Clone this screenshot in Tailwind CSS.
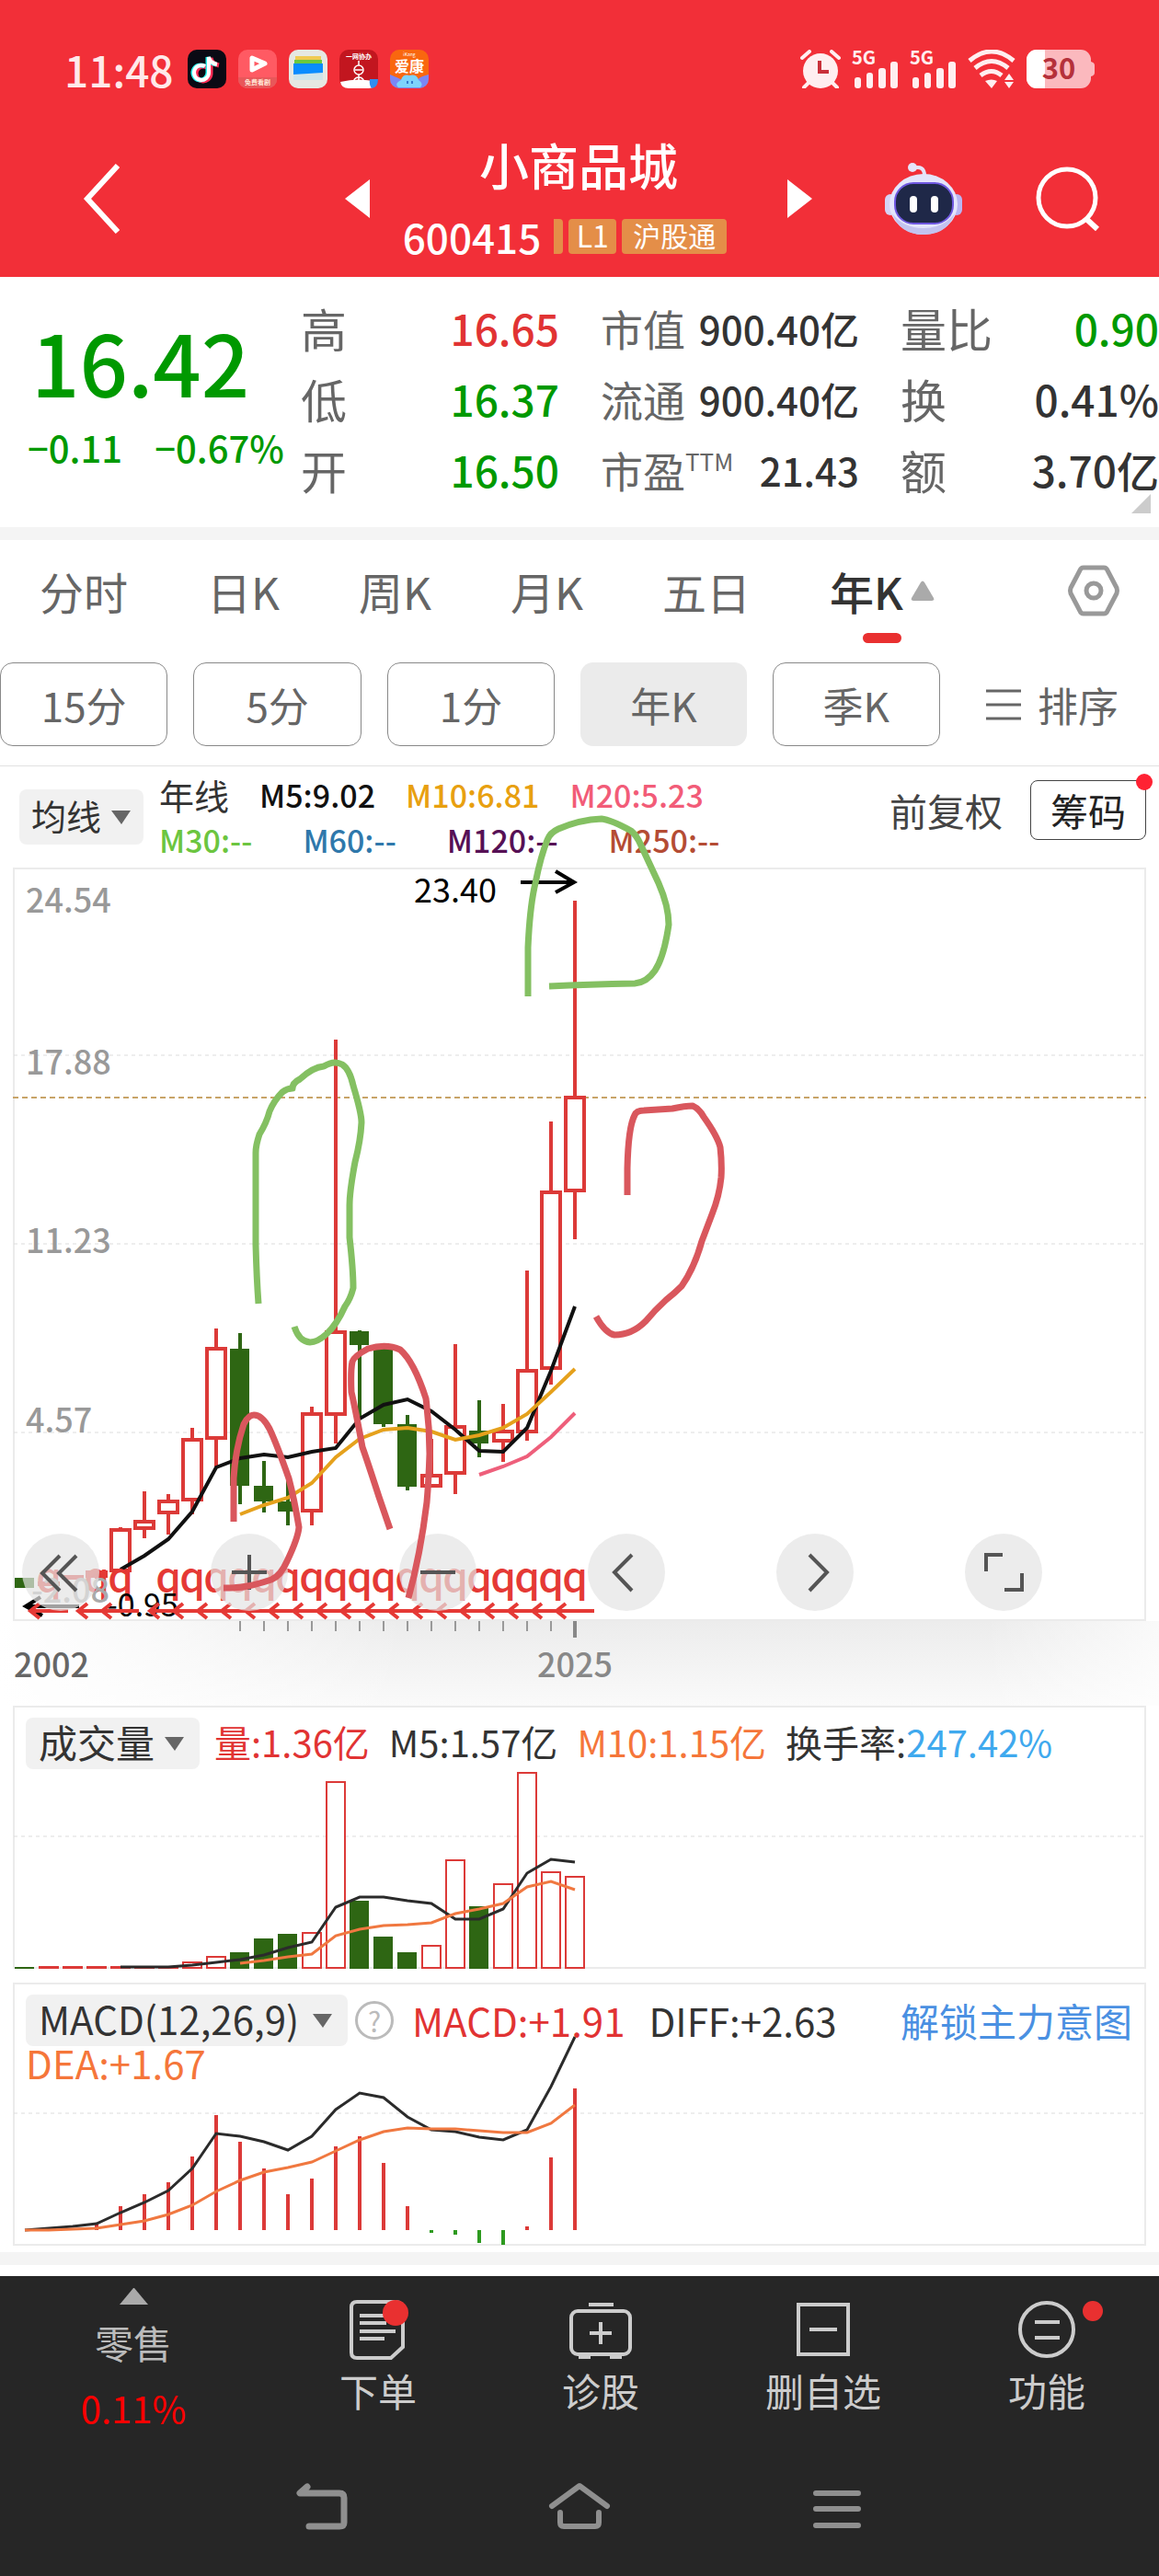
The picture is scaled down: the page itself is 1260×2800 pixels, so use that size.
<!DOCTYPE html>
<html lang="zh-CN">
<head>
  <meta charset="UTF-8" />
  <meta name="viewport" content="width=device-width, initial-scale=1.0" />
  <title>小商品城 600415</title>
  <script src="https://cdn.jsdelivr.net/npm/@tailwindcss/browser@4"></script>
</head>
<body class="bg-white text-[#333] font-['Noto_Sans_CJK_SC',sans-serif] whitespace-nowrap overflow-x-hidden">

  <header class="bg-[#f22f38] text-white">
    <!-- Barra de estado -->
    <div class="flex items-center justify-between pt-[54px] pl-[70px] pr-[70px]">
      <div class="flex items-center gap-[13px] h-[42px]">
        <span class="text-[46px] leading-[42px] font-medium text-[#ffe9ea] w-[121px]">11:48</span>
        <svg class="size-[42px]" viewBox="0 0 42 42">
          <rect width="42" height="42" rx="10" fill="#0a0a14" />
          <g fill="none" stroke-width="5">
            <path d="M20 18a8 8 0 1 0 4 7V8c1 5 4 7 9 8" stroke="#fe2c55" transform="translate(1 1)" />
            <path d="M18 18a8 8 0 1 0 4 7V8c1 5 4 7 9 8" stroke="#25f4ee" />
            <path d="M19 18a8 8 0 1 0 4 7V8c1 5 4 7 9 8" stroke="#fff" stroke-width="4" />
          </g>
        </svg>
        <svg class="size-[42px]" viewBox="0 0 42 42">
          <rect width="42" height="42" rx="10" fill="#ff5a63" />
          <path d="M0 30h42v2a10 10 0 0 1-10 10H10a10 10 0 0 1-10-10z" fill="#e8575a" />
          <path d="M15 9v13l14-7z" fill="#ff5a63" stroke="#fff" stroke-width="5" stroke-linejoin="round" />
          <text x="21" y="38" font-size="7" font-weight="700" text-anchor="middle" fill="#ffe9d8">免费看剧</text>
        </svg>
        <svg class="size-[42px]" viewBox="0 0 42 42">
          <rect width="42" height="42" rx="10" fill="#e6e8e2" />
          <path d="M5 27l32-2v8H5z" fill="#cfe4ea" />
          <path d="M7 7h28v5H7z" fill="#f0cb54" />
          <path d="M6 11h30v5H6z" fill="#6cc93e" />
          <path d="M5 15h32v10L5 27z" fill="#0a8cff" />
        </svg>
        <svg class="size-[42px]" viewBox="0 0 42 42">
          <rect width="42" height="42" rx="10" fill="#c2161f" />
          <path d="M1 35q20-5 40 0q-2 7-9 7H10q-8 0-9-7z" fill="#fff" />
          <text x="21" y="10" font-size="7" font-weight="700" text-anchor="middle" fill="#fff">一网协办</text>
          <g fill="none" stroke="#fff" stroke-width="1.5">
            <circle cx="21" cy="22" r="5" />
            <path d="M21 12v5M17 22h8M21 27v12M15 38q0-8 6-8t6 8M14 36h14" />
          </g>
          <path d="M33 32h9q0 9-7 10q-3-4-2-10z" fill="#2f8df0" />
        </svg>
        <svg class="size-[42px]" viewBox="0 0 42 42">
          <rect width="42" height="42" rx="10" fill="#f9670f" />
          <path d="M0 27q10 4 13 6l16 0q4-4 13-6v5a10 10 0 0 1-10 10H10a10 10 0 0 1-10-10z" fill="#7b86f5" />
          <path d="M9 41q-5-4 3-8q2-7 9-5q8-2 10 5q6 4 2 8z" fill="#7ed3fb" />
          <text x="21" y="7" font-size="5" text-anchor="middle" fill="#fff">iKang</text>
          <text x="21" y="24" font-size="16" font-weight="700" text-anchor="middle" fill="#fff">爱康</text>
          <path d="M19 34v3M24 34v3" stroke="#1f5fc0" stroke-width="1.5" />
        </svg>
      </div>

      <div class="flex items-center gap-3 h-[42px] text-[#ffeef0]">
        <svg class="w-11 h-[42px]" viewBox="0 0 44 42">
          <circle cx="22" cy="23" r="19" fill="currentColor" />
          <path d="M2 9l8-7M42 9l-8-7M4 41l6-6M40 41l-6-6" stroke="currentColor" stroke-width="4" stroke-linecap="round" />
          <path d="M21 12v12h10" fill="none" stroke="#c9303a" stroke-width="4" />
        </svg>
        <svg class="w-[51px] h-[42px] overflow-visible" viewBox="0 0 51 42" fill="currentColor">
          <text x="0" y="16" font-size="20" font-weight="700">5G</text>
          <rect x="3" y="30" width="7" height="12" rx="3" /><rect x="16" y="25" width="7" height="17" rx="3" />
          <rect x="29" y="20" width="8" height="22" rx="3" /><rect x="42" y="13" width="8" height="29" rx="3" />
        </svg>
        <svg class="w-[51px] h-[42px] overflow-visible" viewBox="0 0 51 42" fill="currentColor">
          <text x="0" y="16" font-size="20" font-weight="700">5G</text>
          <rect x="3" y="30" width="7" height="12" rx="3" /><rect x="16" y="25" width="7" height="17" rx="3" />
          <rect x="29" y="20" width="8" height="22" rx="3" /><rect x="42" y="13" width="8" height="29" rx="3" />
        </svg>
        <svg class="w-[52px] h-[42px]" viewBox="0 0 52 42">
          <path d="M2 12q24-20 48 0M8 20q18-15 36 0M14 28q12-9 23 0" fill="none" stroke="currentColor" stroke-width="5" />
          <path d="M19 34q7-3 13 0l-6 8zM40 33l5-7 5 7zM40 35l5 7 5-7z" fill="currentColor" />
        </svg>
        <svg class="w-[74px] h-[42px] overflow-visible" viewBox="0 0 74 42">
          <rect width="70" height="42" rx="11" fill="#fbb9be" />
          <path d="M11 0h9v42h-9A11 11 0 0 1 0 31V11A11 11 0 0 1 11 0z" fill="#fff" />
          <path d="M70 13q4 1 4 4v8q0 3-4 4z" fill="#fbb9be" />
          <text x="35" y="32" font-size="31" font-weight="700" text-anchor="middle" fill="#b5303a">30</text>
        </svg>
      </div>
    </div>

    <!-- Título -->
    <div class="flex items-center mt-[34px] h-[171px] pr-[64px]">
      <button class="w-[375px] pl-[90px] text-left" aria-label="返回">
        <svg class="w-[40px] h-[76px]" viewBox="0 0 40 76" fill="none" stroke="#fff" stroke-width="6">
          <path d="M38 2L5 38l33 36" />
        </svg>
      </button>
      <button aria-label="上一只"><svg class="w-[27px] h-[42px]" viewBox="0 0 27 42"><path d="M27 0v42L0 21z" fill="#fff" /></svg></button>
      <div class="flex-1 flex flex-col items-center gap-[14px]">
        <h1 class="text-[54px] leading-[68px] font-medium">小商品城</h1>
        <div class="flex items-center gap-[6px] h-[60px] pr-[30px]">
          <span class="text-[44px] leading-[60px] font-medium mr-2">600415</span>
          <span class="w-[10px] h-[38px] rounded-r-[4px] bg-[#e48e48]"></span>
          <span class="w-[52px] h-[38px] rounded-[4px] bg-[#e48e48] text-[32px] leading-[34px] text-center">L1</span>
          <span class="w-[114px] h-[38px] rounded-[4px] bg-[#e48e48] text-[30px] leading-[34px] text-center">沪股通</span>
        </div>
      </div>
      <button aria-label="下一只"><svg class="w-[27px] h-[42px]" viewBox="0 0 27 42"><path d="M0 0v42l27-21z" fill="#fff" /></svg></button>
      <button class="ml-[79px]" aria-label="智能助手">
        <svg class="w-[84px] h-[78px]" viewBox="0 0 84 78">
          <path d="M30 6q13-4 13 8" fill="none" stroke="#e6e4fb" stroke-width="4" />
          <circle cx="30" cy="5" r="5" fill="#e6e4fb" />
          <rect x="0" y="34" width="12" height="23" rx="6" fill="#d5d3f6" /><rect x="72" y="34" width="12" height="23" rx="6" fill="#b9b5f2" />
          <ellipse cx="42" cy="45" rx="37" ry="33" fill="#e4e5fb" />
          <path d="M8 55q8 23 34 23t34-23q-12 16-34 16T8 55z" fill="#c3c3f0" />
          <rect x="11" y="22" width="63" height="44" rx="20" fill="#1f2848" stroke="#6f58e0" stroke-width="2" />
          <rect x="27" y="36" width="8" height="18" rx="4" fill="#fff" /><rect x="50" y="36" width="8" height="18" rx="4" fill="#fff" />
        </svg>
      </button>
      <button class="ml-[80px]" aria-label="搜索">
        <svg class="w-[70px] h-[70px]" viewBox="0 0 70 70" fill="none" stroke="#fff" stroke-width="5">
          <circle cx="34" cy="34" r="31" /><path d="M55 57l12 11" stroke-width="6" />
        </svg>
      </button>
    </div>
  </header>

  <!-- Cotización -->
  <section class="relative flex h-[286px] pt-[17px] border-b-[14px] border-[#f4f4f4] text-[46px] leading-[77px]">
    <div class="w-[327px] pl-[30px] pt-[26px] text-[#009900] font-medium">
      <div class="text-[92px] leading-[96px] pl-1">16.42</div>
      <div class="flex gap-[35px] mt-[22px] text-[40px] leading-[48px]"><span>−0.11</span><span>−0.67%</span></div>
    </div>
    <dl class="flex-1 grid grid-cols-3 gap-x-[45px] content-start text-[#666]">
      <div class="flex justify-between"><dt class="text-[50px]">高</dt><dd class="font-medium text-[#e13333]">16.65</dd></div>
      <div class="flex justify-between"><dt>市值</dt><dd class="font-medium text-[#333] text-[42px]">900.40亿</dd></div>
      <div class="flex justify-between"><dt class="text-[50px]">量比</dt><dd class="font-medium text-[#009900]">0.90</dd></div>
      <div class="flex justify-between"><dt class="text-[50px]">低</dt><dd class="font-medium text-[#009900]">16.37</dd></div>
      <div class="flex justify-between"><dt>流通</dt><dd class="font-medium text-[#333] text-[42px]">900.40亿</dd></div>
      <div class="flex justify-between"><dt class="text-[50px]">换</dt><dd class="font-medium text-[#333]">0.41%</dd></div>
      <div class="flex justify-between"><dt class="text-[50px]">开</dt><dd class="font-medium text-[#009900]">16.50</dd></div>
      <div class="flex justify-between"><dt class="flex">市盈<span class="text-[26px] leading-[58px]">TTM</span></dt><dd class="font-medium text-[#333] text-[42px]">21.43</dd></div>
      <div class="flex justify-between"><dt class="text-[50px]">额</dt><dd class="font-medium text-[#333]">3.70亿</dd></div>
    </dl>
    <svg class="absolute right-[9px] bottom-[15px] size-[21px]" viewBox="0 0 21 21"><path d="M21 0v21H0z" fill="#ccc" /></svg>
  </section>

  <!-- Periodos -->
  <section class="pt-[22px] pb-[21px] border-b border-[#e2e2e2] text-[#666]">
    <nav class="flex items-center h-[66px] pl-[43px] pr-[42px] gap-[86px] text-[48px] leading-[66px]">
      <button>分时</button>
      <button>日K</button>
      <button>周K</button>
      <button>月K</button>
      <button>五日</button>
      <button class="relative flex items-center gap-2 text-[#333] font-medium">年K
        <svg class="w-[26px] h-[22px]" viewBox="0 0 26 22"><path d="M11 2q2-3 4 0l10 17q1 3-2 3H3q-3 0-2-3z" fill="#aaa" /></svg>
        <span class="absolute left-1/2 -translate-x-1/2 -bottom-6 w-[42px] h-[11px] rounded-full bg-[#e93030]"></span>
      </button>
      <button class="ml-auto" aria-label="设置">
        <svg class="w-[58px] h-[56px]" viewBox="0 0 58 56" fill="none" stroke="#999" stroke-width="5">
          <path d="M18 3h22q3 0 4 3l10 19q1 3 0 6L44 50q-1 3-4 3H18q-3 0-4-3L4 31q-1-3 0-6L14 6q1-3 4-3z" /><circle cx="29" cy="28" r="8" />
        </svg>
      </button>
    </nav>
    <div class="flex gap-7 mt-[45px] h-[91px] text-[44px] leading-[86px]">
      <button class="flex-1 border border-[#888] rounded-[14px]">15分</button>
      <button class="flex-1 border border-[#888] rounded-[14px]">5分</button>
      <button class="flex-1 border border-[#888] rounded-[14px]">1分</button>
      <button class="flex-1 rounded-[14px] bg-[#ebebeb]">年K</button>
      <button class="flex-1 border border-[#888] rounded-[14px]">季K</button>
      <button class="w-[210px] pl-[22px] flex items-center gap-[18px]">
        <svg class="w-[38px] h-[36px]" viewBox="0 0 38 36" stroke="#666" stroke-width="3"><path d="M0 3h38M0 18h38M0 33h38" /></svg>排序
      </button>
    </div>
  </section>

  <main class="relative">
    <!-- Medias móviles -->
    <div class="flex items-center h-[110px] pl-[21px] pr-[14px]">
      <div class="relative mr-[17px]">
        <select aria-label="主图指标" class="appearance-none w-[135px] h-[60px] pl-[13px] rounded-[8px] bg-[#f1f1f1] text-[38px] leading-[54px] pb-1"><option>均线</option></select>
        <svg class="absolute right-[14px] top-[23px] w-[21px] h-[15px] pointer-events-none" viewBox="0 0 21 15"><path d="M0 0h21L11 15z" fill="#666" /></svg>
      </div>
      <div class="text-[34px] leading-[49px] font-medium">
        <div class="flex gap-[33px]"><span class="text-[38px] font-normal">年线</span><span class="text-[#111]">M5:9.02</span><span class="text-[#e8a010]">M10:6.81</span><span class="text-[#f25c78]">M20:5.23</span></div>
        <div class="flex gap-[55px]"><span class="text-[#6cc540]">M30:--</span><span class="text-[#2f78ab]">M60:--</span><span class="text-[#561055]">M120:--</span><span class="text-[#b44c34]">M250:--</span></div>
      </div>
      <div class="flex items-center gap-[30px] ml-auto pb-4 text-[41px] leading-[58px]">
        <button class="text-[#444]">前复权</button>
        <button class="relative w-[126px] h-[65px] border-[1px] border-[#444] rounded-[8px] text-[#222]">筹码
          <span class="absolute -top-[8px] -right-[8px] size-[18px] rounded-full bg-[#ff2233]"></span>
        </button>
      </div>
    </div>

    <!-- Gráfico K anual -->
    <div class="grid">
      <svg id="kline" class="w-full col-start-1 row-start-1" viewBox="0 943 1260 911">
        <defs>
          <linearGradient id="shade" x1="0" y1="0" x2="0" y2="1"><stop offset="0" stop-color="#ececec" /><stop offset="1" stop-color="#fafafa" /></linearGradient>
          <linearGradient id="fade"><stop offset="0" stop-color="#fff" /><stop offset=".12" stop-color="#fff" stop-opacity=".7" /><stop offset=".35" stop-color="#fff" stop-opacity="0" /><stop offset=".85" stop-color="#fff" stop-opacity="0" /><stop offset="1" stop-color="#fff" stop-opacity=".7" /></linearGradient>
        </defs>
        <rect y="1762" width="1260" height="92" fill="url(#shade)" />
        <rect y="1762" width="1260" height="92" fill="url(#fade)" />
        <rect x="15" y="944" width="1230" height="817" fill="#fff" stroke="#ebebeb" stroke-width="2" />
        <path d="M15 1147h1230M15 1352h1230M15 1557h1230" stroke="#dcdcdc" stroke-width="1" stroke-dasharray="4 4" />
        <path d="M14 1193h1232" stroke="#c8a468" stroke-width="2" stroke-dasharray="6 4" />
      </svg>
      <div class="col-start-1 row-start-1 self-end flex justify-between pl-6 pr-[127px] pb-[103px]">
        <button aria-label="最早" class="size-[84px] rounded-full bg-[#e4e4e4]/70"><svg viewBox="0 0 84 84" fill="none" stroke="#555" stroke-width="4"><path d="M41 24L22 43l19 19M59 24L40 43l19 19" /></svg></button>
        <button aria-label="放大" class="size-[84px] rounded-full bg-[#e4e4e4]/70"><svg viewBox="0 0 84 84" fill="none" stroke="#555" stroke-width="4"><path d="M42 23v38M23 42h38" /></svg></button>
        <button aria-label="缩小" class="size-[84px] rounded-full bg-[#e4e4e4]/70"><svg viewBox="0 0 84 84" fill="none" stroke="#555" stroke-width="4"><path d="M23 42h38" /></svg></button>
        <button aria-label="左移" class="size-[84px] rounded-full bg-[#e4e4e4]/70"><svg viewBox="0 0 84 84" fill="none" stroke="#555" stroke-width="4"><path d="M48 23L29 42l19 20" /></svg></button>
        <button aria-label="右移" class="size-[84px] rounded-full bg-[#e4e4e4]/70"><svg viewBox="0 0 84 84" fill="none" stroke="#555" stroke-width="4"><path d="M36 23l19 19-19 20" /></svg></button>
        <button aria-label="全屏" class="size-[84px] rounded-full bg-[#e4e4e4]/70"><svg viewBox="0 0 84 84" fill="none" stroke="#555" stroke-width="4"><path d="M23 41V23h18M43 61h19V43" /></svg></button>
      </div>
    </div>

    <!-- Volumen -->
    <div class="grid">
      <svg id="volume" class="w-full col-start-1 row-start-1" viewBox="0 1854 1260 301">
        <rect x="15" y="1855" width="1230" height="284" fill="none" stroke="#ebebeb" stroke-width="2" />
        <path d="M15 1996h1230" stroke="#dcdcdc" stroke-width="1" stroke-dasharray="4 4" />
      </svg>
      <div class="col-start-1 row-start-1 self-start flex items-center pl-7 pt-[13px] text-[40px] leading-[50px]">
        <div class="relative mr-4">
          <select aria-label="副图指标" class="appearance-none w-[189px] h-[56px] pl-[14px] rounded-[8px] bg-[#f1f1f1] text-[42px] leading-[52px] pb-1"><option>成交量</option></select>
          <svg class="absolute right-[17px] top-[21px] w-[21px] h-[15px] pointer-events-none" viewBox="0 0 21 15"><path d="M0 0h21L11 15z" fill="#666" /></svg>
        </div>
        <div class="flex gap-[21px] pb-1"><span class="text-[#e13333]">量:1.36亿</span><span>M5:1.57亿</span><span class="text-[#f5763a]">M10:1.15亿</span><span>换手率:<span class="text-[#3fa9ee]">247.42%</span></span></div>
      </div>
    </div>

    <!-- MACD -->
    <div class="grid">
      <svg id="macd" class="w-full col-start-1 row-start-1" viewBox="0 2155 1260 293">
        <rect x="15" y="2156" width="1230" height="284" fill="none" stroke="#ebebeb" stroke-width="2" />
        <path d="M15 2297h1230" stroke="#dcdcdc" stroke-width="1" stroke-dasharray="4 4" />
      </svg>
      <div class="col-start-1 row-start-1 self-start pt-[13px] pl-7 pr-[29px] text-[42px]">
        <div class="flex items-center h-[56px] leading-[52px]">
          <div class="relative mr-2">
            <select aria-label="副图指标二" class="appearance-none w-[350px] h-[56px] pl-[14px] rounded-[8px] bg-[#f1f1f1] leading-[52px] pb-1"><option>MACD(12,26,9)</option></select>
            <svg class="absolute right-[17px] top-[21px] w-[21px] h-[15px] pointer-events-none" viewBox="0 0 21 15"><path d="M0 0h21L11 15z" fill="#666" /></svg>
          </div>
          <button class="size-[42px] mr-5 border-[3px] border-[#bbb] rounded-full text-[#bbb] text-[30px] leading-[32px]">?</button>
          <span class="mr-[26px] text-[#e13333]">MACD:+1.91</span><span>DIFF:+2.63</span>
          <a href="#" class="ml-auto text-[#4a90e2]">解锁主力意图</a>
        </div>
        <div class="leading-[36px] text-[#f5763a]">DEA:+1.67</div>
      </div>
    </div>

    <!-- Trazos a mano -->
    <svg class="absolute inset-x-0 top-0 w-full pointer-events-none" viewBox="0 833 1260 930" fill="none" stroke-width="7" stroke-linejoin="round">
      <g stroke="#84c062">
        <path d="M574 1083V1030Q576 985 582 960Q588 930 595 913Q598 905 607 901Q630 891 654 890Q664 891 686 903Q692 908 696 917L716 960Q727 985 727 1005Q722 1040 712 1055Q703 1068 690 1069Q640 1070 597 1072" />
        <path d="M281 1417Q279 1390 278 1353V1253Q278 1245 282 1233Q290 1220 293 1208Q298 1196 307 1187Q312 1183 318 1183Q318 1177 326 1173Q340 1160 352 1159Q363 1152 372 1157Q380 1162 384 1180Q393 1210 393 1220Q392 1240 386 1263Q380 1295 380 1310V1345Q384 1380 384 1400Q381 1412 375 1420Q366 1440 355 1450Q345 1459 337 1459Q325 1458 320 1442" />
      </g>
      <g stroke="#d9575d">
        <path d="M254 1654V1607Q256 1575 265 1548Q270 1538 276 1538Q285 1538 293 1553Q301 1570 314 1607Q320 1630 325 1660Q324 1672 312 1697Q305 1713 295 1717Q280 1722 269 1724Q260 1726 243 1726" />
        <path d="M424 1662L412 1627Q400 1590 394 1573Q386 1530 382 1513Q381 1490 383 1480Q385 1474 400 1466Q420 1460 435 1467Q450 1480 463 1520Q467 1550 467 1580Q466 1610 464 1633Q457 1690 444 1737" />
        <path d="M682 1299V1270Q683 1225 690 1212Q692 1207 700 1207L731 1205Q745 1202 753 1202Q760 1205 765 1214Q780 1235 783 1247Q785 1265 784 1280Q782 1300 774 1320L763 1349Q755 1378 741 1398Q733 1406 724 1413Q712 1424 702 1436Q687 1451 668 1451Q658 1449 648 1431" />
      </g>
    </svg>
  </main>

  <div class="h-[14px] bg-[#f4f4f4]"></div>

  <footer class="mt-3 bg-[#262626] text-[#ccc] pb-12">
    <div class="grid grid-cols-[290fr_242fr_242fr_242fr_244fr] h-[170px] text-[42px] leading-[54px]">
      <button class="flex flex-col items-center pt-[13px] text-[#bbb]">
        <svg class="w-[31px] h-[18px]" viewBox="0 0 31 18"><path d="M15 0h1l15 18H0z" fill="#aaa" /></svg>
        <span class="mt-[14px]">零售</span>
        <span class="mt-[17px] text-[40px] text-[#ff0000]">0.11%</span>
      </button>
      <button class="flex flex-col items-center pt-[26px]">
        <svg class="w-[66px] h-[66px] mb-[5px] overflow-visible" viewBox="0 0 66 66" fill="none" stroke="#ccc" stroke-width="4">
          <path d="M10 2h42q8 0 8 8v41L47 63H10q-6 0-6-6V8q0-6 6-6zM13 17h29M13 25h29M13 34h39M13 42h27" />
          <circle cx="52" cy="14" r="14" fill="#e93030" stroke="none" />
        </svg>下单
      </button>
      <button class="flex flex-col items-center pt-[26px]">
        <svg class="w-[68px] h-[66px] mb-[5px]" viewBox="0 0 68 66" fill="none" stroke="#ccc" stroke-width="4">
          <rect x="2" y="12" width="64" height="47" rx="7" /><path d="M21 5h27M34 24v24M22 36h24M10 62h13M44 62h13" />
        </svg>诊股
      </button>
      <button class="flex flex-col items-center pt-[26px]">
        <svg class="w-[60px] h-[66px] mb-[5px]" viewBox="0 0 60 66" fill="none" stroke="#ccc" stroke-width="4">
          <rect x="3" y="5" width="54" height="54" /><path d="M15 32h30" />
        </svg>删自选
      </button>
      <button class="flex flex-col items-center pt-[26px]">
        <svg class="w-[66px] h-[66px] mb-[5px] overflow-visible" viewBox="0 0 66 66" fill="none" stroke="#ccc" stroke-width="4">
          <circle cx="33" cy="32" r="29" /><path d="M20 24h27M20 41h27" />
          <circle cx="83" cy="12" r="11" fill="#e93030" stroke="none" />
        </svg>功能
      </button>
    </div>
    <div class="grid grid-cols-3 justify-items-center px-[210px] mt-[54px]">
      <button aria-label="返回键"><svg class="w-[60px] h-[54px]" viewBox="0 0 60 54" fill="none" stroke="#8f8f8f" stroke-width="7" stroke-linecap="round" stroke-linejoin="round"><path d="M14 5L6 12h43q5 0 5 5v27q0 4-5 4H16" /></svg></button>
      <button aria-label="主页键"><svg class="w-[68px] h-[54px]" viewBox="0 0 68 54" fill="none" stroke="#8f8f8f" stroke-width="6" stroke-linecap="round" stroke-linejoin="round"><path d="M4 26L34 4l30 22M13 33v11q0 4 4 4h34q4 0 4-4V33" /></svg></button>
      <button aria-label="任务键"><svg class="w-[54px] h-[54px]" viewBox="0 0 54 54" fill="none" stroke="#8f8f8f" stroke-width="6" stroke-linecap="round"><path d="M4 12h46M4 29h46M4 47h46" /></svg></button>
    </div>
  </footer>

  <script>
    const RED = '#dc3a38', GREEN = '#2e6613';
    const xAt = i => 27 + 26 * i;

    // [máximo, cuerpo arriba, cuerpo abajo, mínimo, sube]
    const CANDLES = [
      [1715,1715,1726,1726,0],[1719,1719,1721,1721,1],[1712,1712,1714,1714,1],[1706,1707,1715,1716,1],
      [1660,1661,1709,1709,1],[1621,1652,1663,1672,1],[1624,1630,1646,1668,1],[1552,1563,1632,1646,1],
      [1444,1464,1565,1594,1],[1449,1466,1615,1635,0],[1588,1615,1632,1644,0],[1608,1632,1643,1658,0],
      [1529,1535,1644,1658,1],[1130,1446,1539,1569,1],[1446,1447,1462,1543,0],[1460,1461,1548,1551,0],
      [1538,1548,1616,1620,0],[1564,1602,1617,1617,1],[1461,1549,1603,1624,1],[1522,1555,1569,1584,0],
      [1526,1554,1568,1589,1],[1381,1488,1558,1566,1],[1219,1294,1489,1505,1],[979,1191,1296,1347,1]
    ];
    const MA5 = [1706,1691,1673,1643,1595,1585,1581,1584,1578,1574,1542,1527,1521,1534,1554,1577,1578,1552,1490,1420];
    const MA10 = [1646,1636,1628,1612,1584,1564,1554,1552,1556,1565,1560,1552,1537,1513,1488];
    const MA20 = [1603,1594,1583,1562,1536];

    const VOLUME = [2138,2138,2138,2138,2138,2138,2138,2133,2127,2122,2107,2102,2101,1937,2066,2105,2122,2115,2022,2072,2048,1927,2035,2040];
    const VOL5 = [2138,2138,2138,2136,2133,2130,2125,2117,2111,2073,2062,2062,2066,2069,2086,2086,2075,2036,2021,2024];
    const VOL10 = [2134,2131,2127,2124,2104,2097,2093,2092,2090,2080,2075,2069,2051,2045,2054];

    const MACD = [2424,2423,2422,2418,2398,2385,2372,2344,2299,2328,2357,2385,2368,2333,2322,2351,2398,2427,2429,2438,2440,2420,2345,2270];
    const DIFF = [2424,2422,2420,2417,2405,2394,2381,2357,2319,2322,2328,2337,2322,2293,2275,2280,2301,2315,2317,2323,2326,2315,2268,2214];
    const DEA = [2424,2424,2423,2422,2418,2414,2407,2397,2382,2370,2361,2356,2350,2338,2326,2317,2313,2314,2314,2316,2318,2318,2308,2288];

    function line(values, start, color, width = 3) {
      const pts = values.map((y, k) => `${xAt(start + k)},${y}`).join(' ');
      return `<polyline points="${pts}" fill="none" stroke="${color}" stroke-width="${width}" />`;
    }
    function label(x, y, text, color, size = 36, weight = 500, anchor = 'start') {
      return `<text x="${x}" y="${y}" font-size="${size}" font-weight="${weight}" fill="${color}" text-anchor="${anchor}">${text}</text>`;
    }
    function add(id, markup) {
      document.getElementById(id).insertAdjacentHTML('beforeend', markup);
    }

    let k = '';
    CANDLES.forEach(([high, top, bottom, low, up], i) => {
      const x = xAt(i), c = up ? RED : GREEN;
      k += `<path d="M${x} ${high}V${top}M${x} ${bottom}V${low}" stroke="${c}" stroke-width="4" />`;
      k += up
        ? `<rect x="${x - 10}" y="${top + 2}" width="20" height="${Math.max(bottom - top - 4, 1)}" fill="#fff" stroke="${c}" stroke-width="4" />`
        : `<rect x="${x - 11}" y="${top}" width="21" height="${bottom - top}" fill="${c}" />`;
    });
    k += line(MA5, 4, '#111', 4) + line(MA10, 9, '#e5a11c', 4) + line(MA20, 19, '#ee5f7b', 4);

    // Marcas q y flechas
    for (let i = 1; i < 24; i++) {
      if (i === 2 || i === 5) continue;
      k += label(xAt(i), 1730, 'q', '#e53935', 44, 500, 'middle');
    }
    k += '<path d="M30 1746H86M44 1736L28 1746l18 10" fill="none" stroke="#000" stroke-width="4" />';
    k += label(116, 1757, '-0.95', '#000', 34, 400);
    let arrows = 'M33 1751H74M85 1751H151M162 1751H646';
    const tips = [33, 85, 111];
    for (let x = 163; x < 610; x += 26) tips.push(x);
    tips.forEach(x => { arrows += `M${x + 10} 1743L${x} 1751l10 8`; });
    k += `<path d="${arrows}" fill="none" stroke="#e53935" stroke-width="4" />`;

    k += label(28, 992, '24.54', '#999') + label(28, 1168, '17.88', '#999');
    k += label(28, 1362, '11.23', '#999') + label(28, 1557, '4.57', '#999') + label(34, 1742, '-2.08', '#aaa');
    k += label(450, 981, '23.40', '#000', 36, 400);
    k += '<path d="M566 959H624M604 947l20 12-20 11" fill="none" stroke="#000" stroke-width="4" />';

    for (let i = 9; i < 23; i++) k += `<path d="M${xAt(i)} 1762v11" stroke="#999" stroke-width="2" />`;
    k += '<path d="M625 1762v18" stroke="#888" stroke-width="4" />';
    k += label(15, 1823, '2002', '#666') + label(625, 1823, '2025', '#888', 36, 500, 'middle');
    add('kline', k);

    let v = '';
    VOLUME.forEach((y, i) => {
      const x = xAt(i);
      v += CANDLES[i][4]
        ? `<rect x="${x - 10}" y="${y}" width="20" height="${2139 - y}" fill="#fff" stroke="${RED}" stroke-width="2" />`
        : `<rect x="${x - 11}" y="${y}" width="21" height="${2140 - y}" fill="${GREEN}" />`;
    });
    add('volume', v + line(VOL5, 4, '#2b2b2b') + line(VOL10, 9, '#f07840'));

    let m = '';
    MACD.forEach((y, i) => {
      m += `<path d="M${xAt(i)} 2424V${y}" stroke="${y > 2424 ? '#2e9a20' : RED}" stroke-width="4" />`;
    });
    add('macd', m + line(DIFF, 0, '#2b2b2b') + line(DEA, 0, '#f07840'));
  </script>
</body>
</html>
